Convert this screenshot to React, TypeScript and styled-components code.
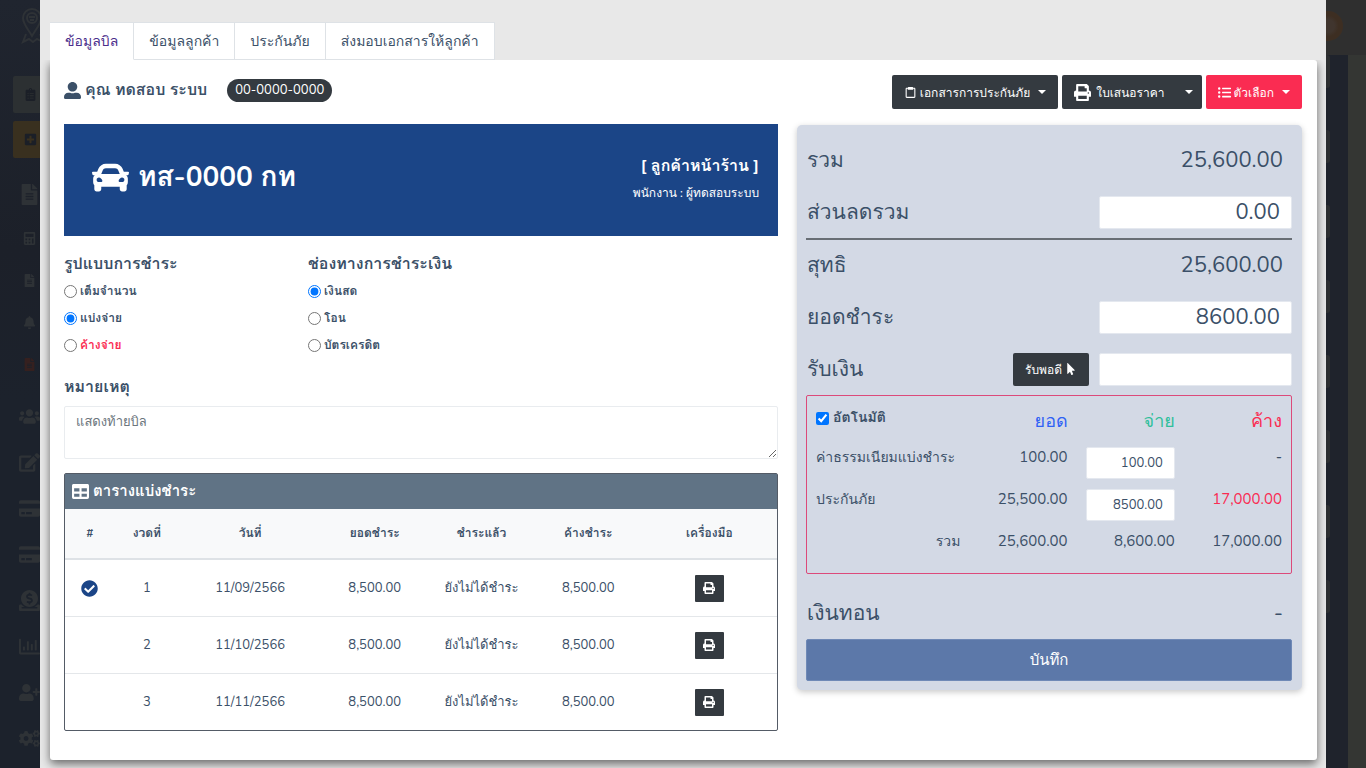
import React from "react";
import styled, { createGlobalStyle } from "styled-components";
import {
  FaBell, FaCalculator, FaCar, FaCheckCircle, FaClipboardList, FaCogs, FaCreditCard, FaDonate, FaEdit,
  FaFileAlt, FaListUl, FaMousePointer, FaPlusSquare, FaPrint, FaRegChartBar, FaTable, FaUserAlt, FaUserPlus, FaUsers,
} from "react-icons/fa";
import { BiClipboard } from "react-icons/bi";

const Global = createGlobalStyle`
  *, *::before, *::after { box-sizing: border-box; }
  body { margin: 0; background: #1c212b; }
  body, button, input, textarea { font-family: Nunito, Lato, Loma, sans-serif; }
  h1, h2, h3, p { margin: 0; }
`;

const ink = "#3b5068";
const dark = "#343a40";
const danger = "#fa2c52";
const navy = "#1b4587";

const Page = styled.div`
  display: flex;
  min-height: 100vh;
  color: ${ink};
  font-size: 14px;
  line-height: 21px;
`;

/* Dimmed application behind the dialog */
const Sidebar = styled.nav`
  flex: 0 0 40px;
  overflow: hidden;
  background: linear-gradient(#20252f, #1c2029 250px, #1c222c 400px);
  color: #2e3236;
  padding-top: 8px;
`;
const SideLogo = styled.div`
  height: 68px;
  padding-left: 21px;
  svg { display: block; }
`;
const SideButton = styled.a<{ $warm?: boolean }>`
  display: flex;
  align-items: center;
  width: 60px;
  height: 37px;
  margin: 0 0 8px 13px;
  padding-left: 11px;
  border-radius: 2px;
  background: ${(p) => (p.$warm ? "#39301f" : "#2c3032")};
  color: #1b1f27;
`;
const SideLink = styled.a<{ $small?: boolean; $red?: boolean }>`
  display: flex;
  align-items: center;
  justify-content: center;
  width: 58px;
  height: ${(p) => (p.$small ? 42 : 46)}px;
  color: ${(p) => (p.$red ? "#35201f" : "inherit")};
`;
const SideGroup = styled.div`
  padding: 5px 0 8px;
`;
const Behind = styled.div`
  flex: 0 0 40px;
  overflow: hidden;
  display: flex;
  flex-direction: column;
  background: #343633;
`;
const BehindTop = styled.div`
  height: 55px;
  padding-top: 11px;
  background: #2f2f2f;
`;
const Avatar = styled.div`
  width: 30px;
  height: 30px;
  margin-left: -13px;
  border-radius: 50%;
  background: radial-gradient(circle, #40352e 30%, #3d2e22 50%);
`;
const BehindBody = styled.div`
  flex: 1;
  width: 22px;
  background: #1f232c;
  display: flex;
  flex-direction: column;
  gap: 42px;
`;
const Stub = styled.div`
  width: 4px;
  height: 33px;
  border-radius: 0 3px 3px 0;
  background: #2d2f31;
`;

/* Dialog */
const Modal = styled.main`
  flex: 1;
  min-width: 0;
  padding: 22px 9px 8px 10px;
  background: #e8e8e8;
`;
const Tabs = styled.div`
  display: flex;
`;
const Tab = styled.button<{ $active?: boolean }>`
  height: 38px;
  padding: 0 15px;
  border: 0 solid #dee2e6;
  border-width: 1px 1px 1px 0;
  border-bottom-color: ${(p) => (p.$active ? "#fff" : "#dee2e6")};
  background: #fff;
  color: ${(p) => (p.$active ? "#4b2e8c" : ink)};
  font-size: 14px;
  font-weight: 500;
  cursor: pointer;
`;
const Card = styled.section`
  min-height: 700px;
  padding: 15px 15px 28px 14px;
  border-radius: 0 3px 3px 3px;
  background: #fff;
  box-shadow: 0 4px 10px rgba(0, 0, 0, 0.55);
  clip-path: inset(0 -20px -20px -20px);
`;
const CardTop = styled.header`
  display: flex;
  justify-content: space-between;
  height: 49px;
`;
const Customer = styled.div`
  display: flex;
  align-items: center;
  height: 30px;
`;
const CustomerName = styled.h1`
  margin: 0 20px 0 4px;
  font-size: 16px;
  line-height: 28px;
`;
const Phone = styled.span`
  height: 23px;
  padding: 0 8px;
  border-radius: 12px;
  background: ${dark};
  color: #fff;
  font-size: 13px;
  line-height: 23px;
`;
const Actions = styled.div`
  display: flex;
  gap: 4px;
`;
const Button = styled.button<{ $red?: boolean }>`
  display: flex;
  align-items: center;
  justify-content: center;
  gap: 3px;
  height: 34px;
  padding: 0 12px;
  border: 0;
  border-radius: 2px;
  background: ${(p) => (p.$red ? danger : dark)};
  color: #fff;
  font-size: 12px;
  font-weight: 500;
  cursor: pointer;
`;
const SplitButton = styled.div`
  display: flex;
  ${Button}:first-child { gap: 5px; border-radius: 2px 0 0 2px; }
  ${Button}:last-child { padding: 0 9px 0 8px; border-radius: 0 2px 2px 0; }
`;
const Caret = styled.span`
  margin-left: 5px;
  border: 4px solid transparent;
  border-top-color: currentColor;
  border-bottom: 0;
  ${Button} > &:only-child { margin-left: 0; }
`;
const Columns = styled.div`
  display: grid;
  grid-template-columns: minmax(0, 714fr) minmax(0, 505fr);
  gap: 19px;
  align-items: start;
`;

/* Left column */
const Banner = styled.div`
  display: flex;
  align-items: center;
  justify-content: space-between;
  height: 112px;
  padding: 0 19px 0 28px;
  background: ${navy};
  color: #fff;
`;
const Plate = styled.h2`
  display: flex;
  align-items: center;
  gap: 9px;
  padding-bottom: 6px;
  font-size: 28px;
  line-height: 40px;
`;
const Seller = styled.div`
  text-align: right;
  font-size: 12px;
  line-height: 27px;
  font-weight: 500;
`;
const SellerTitle = styled.h3`
  font-size: 16px;
  line-height: 27px;
`;
const Options = styled.div`
  display: grid;
  grid-template-columns: 244px 1fr;
  margin-top: 14px;
`;
const OptionSet = styled.fieldset`
  min-width: 0;
  margin: 0;
  padding: 0;
  border: 0;
`;
const Heading = styled.legend`
  padding: 0;
  font-size: 16px;
  font-weight: 700;
  line-height: 28px;
`;
const Choice = styled.label<{ $red?: boolean }>`
  display: flex;
  align-items: center;
  gap: 3px;
  height: 27px;
  font-size: 12px;
  font-weight: 700;
  color: ${(p) => (p.$red ? danger : "inherit")};
  input { width: 13px; height: 13px; margin: 0; }
`;
const NoteLabel = styled.label`
  display: block;
  margin: 14px 0 5px;
  font-size: 16px;
  font-weight: 700;
  line-height: 28px;
`;
const Note = styled.textarea`
  display: block;
  width: 100%;
  height: 53px;
  padding: 5px 11px;
  border: 1px solid #e9ecef;
  border-radius: 2px;
  color: ${ink};
  font-size: 13px;
  line-height: 21px;
  resize: vertical;
  &::placeholder { color: #6c757d; }
`;
const Schedule = styled.section`
  margin-top: 14px;
  border: 1px solid #545b66;
  border-radius: 2px;
`;
const ScheduleTitle = styled.h2`
  display: flex;
  align-items: center;
  gap: 4px;
  height: 35px;
  padding-left: 7px;
  background: #607385;
  color: #fff;
  font-size: 15px;
`;
const ScheduleTable = styled.table`
  width: 100%;
  table-layout: fixed;
  border-collapse: collapse;
  text-align: center;
  th { height: 50px; padding: 0; background: #f8f9fa; border-bottom: 2px solid #dee2e6; font-size: 12px; }
  td { height: 57px; padding: 1px 0 0; font-size: 13px; }
  tr + tr td { border-top: 1px solid #e4e7ea; }
  svg { display: block; margin: auto; }
`;
const PrintButton = styled.button`
  width: 29px;
  height: 27px;
  padding: 0;
  border: 0;
  border-radius: 1px;
  background: ${dark};
  color: #fff;
  font-size: 12px;
  vertical-align: middle;
`;

/* Right column */
const Summary = styled.section`
  margin-top: 1px;
  padding: 9px 10px 9px 9px;
  border-radius: 5px;
  background: #d3d9e5;
  box-shadow: 0 2px 6px rgba(0, 0, 0, 0.22);
`;
const Line = styled.div`
  display: flex;
  align-items: center;
  height: 52px;
  padding-left: 1px;
  font-size: 22px;
  line-height: 36px;
  > :first-child { flex: 1; font-weight: 500; font-size: 21px; }
`;
const Amount = styled.span`
  padding-right: 9px;
`;
const Rule = styled.hr`
  height: 2px;
  margin: 0 0 -1px;
  border: 0;
  background: #686e75;
`;
const Field = styled.input`
  width: 193px;
  height: 33px;
  padding: 0 11px;
  border: 1px solid #e4e8ef;
  border-radius: 2px;
  background: #fff;
  color: ${ink};
  font-size: 22px;
  text-align: right;
`;
const ExactButton = styled(Button)`
  height: 33px;
  margin-right: 10px;
`;
const SplitBox = styled.div`
  padding: 0 9px;
  border: 1px solid #dc4a7a;
  border-radius: 2px;
`;
const SplitTable = styled.table`
  width: 100%;
  table-layout: fixed;
  border-collapse: collapse;
  text-align: right;
  font-size: 15px;
  th, td { height: 42px; padding: 0; vertical-align: top; font-weight: 400; line-height: 21px; }
  thead th { height: 51px; padding-top: 11px; font-size: 18px; line-height: 28px; font-weight: 500; }
  th:first-child { text-align: left; font-size: 14px; white-space: nowrap; }
  tfoot th:first-child { text-align: right; }
`;
const Auto = styled.label`
  display: flex;
  align-items: center;
  gap: 4px;
  height: 22px;
  font-size: 14px;
  font-weight: 700;
  input { width: 13px; height: 13px; margin: 0; }
`;
const SmallField = styled(Field)`
  width: 89px;
  height: 32px;
  font-size: 13px;
`;
const Tone = styled.span<{ $color: string }>`
  color: ${(p) => p.$color};
`;
const ChangeLine = styled(Line)`
  margin-top: 13px;
`;
const Save = styled.button`
  display: block;
  width: 100%;
  height: 42px;
  border: 1px solid #6f89b6;
  border-radius: 2px;
  background: #5c78a9;
  color: #fff;
  font-size: 15px;
  font-weight: 500;
`;

const tabs = ["ข้อมูลบิล", "ข้อมูลลูกค้า", "ประกันภัย", "ส่งมอบเอกสารให้ลูกค้า"];
const columns = [
  ["#", "7%"], ["งวดที่", "9%"], ["วันที่", "20%"], ["ยอดชำระ", "15%"],
  ["ชำระแล้ว", "15%"], ["ค้างชำระ", "15%"], ["เครื่องมือ", "19%"],
];
const rows = ["11/09/2566", "11/10/2566", "11/11/2566"];
const menu = [FaUsers, FaEdit, FaCreditCard, FaCreditCard, FaDonate, FaRegChartBar, FaUserPlus, FaCogs];

export default function App() {
  return (
    <Page>
      <Global />
      <Sidebar aria-hidden>
        <SideLogo>
          <svg width="24" height="36" viewBox="0 0 24 36" fill="none" stroke="currentColor" strokeWidth="2">
            <path d="M11 28C7 21 2 16 2 10a9 9 0 0 1 18 0c0 6-5 11-9 18Z" />
            <circle cx="11" cy="10" r="5" />
            <path d="M8 9h6M9 12h4M5 26l-3 8 6-3 4 3 4-3 6 3-3-8" />
          </svg>
        </SideLogo>
        <SideButton href="#"><FaClipboardList size={13} /></SideButton>
        <SideButton href="#" $warm><FaPlusSquare size={13} /></SideButton>
        <SideGroup>
          <SideLink href="#"><FaFileAlt size={21} /></SideLink>
          <SideLink href="#" $small><FaCalculator size={13} /></SideLink>
          <SideLink href="#" $small><FaFileAlt size={13} /></SideLink>
          <SideLink href="#" $small><FaBell size={13} /></SideLink>
          <SideLink href="#" $small $red><FaFileAlt size={13} /></SideLink>
        </SideGroup>
        {menu.map((Icon, i) => <SideLink href="#" key={i}><Icon size={21} /></SideLink>)}
      </Sidebar>

      <Modal>
        <Tabs role="tablist">
          {tabs.map((t, i) => <Tab key={t} role="tab" aria-selected={i === 0} $active={i === 0}>{t}</Tab>)}
        </Tabs>
        <Card>
          <CardTop>
            <Customer>
              <FaUserAlt size={17} />
              <CustomerName>คุณ ทดสอบ ระบบ</CustomerName>
              <Phone>00-0000-0000</Phone>
            </Customer>
            <Actions>
              <Button><BiClipboard size={13} />เอกสารการประกันภัย<Caret /></Button>
              <SplitButton>
                <Button><FaPrint size={17} />ใบเสนอราคา</Button>
                <Button aria-label="เมนูใบเสนอราคา"><Caret /></Button>
              </SplitButton>
              <Button $red><FaListUl size={13} />ตัวเลือก<Caret /></Button>
            </Actions>
          </CardTop>
          <Columns>
            <div>
              <Banner>
                <Plate><FaCar size={37} />ทส-0000 กท</Plate>
                <Seller>
                  <SellerTitle>[ ลูกค้าหน้าร้าน ]</SellerTitle>
                  <p>พนักงาน : ผู้ทดสอบระบบ</p>
                </Seller>
              </Banner>
              <Options>
                <OptionSet>
                  <Heading>รูปแบบการชำระ</Heading>
                  <Choice><input type="radio" name="plan" />เต็มจำนวน</Choice>
                  <Choice><input type="radio" name="plan" defaultChecked />แบ่งจ่าย</Choice>
                  <Choice $red><input type="radio" name="plan" />ค้างจ่าย</Choice>
                </OptionSet>
                <OptionSet>
                  <Heading>ช่องทางการชำระเงิน</Heading>
                  <Choice><input type="radio" name="channel" defaultChecked />เงินสด</Choice>
                  <Choice><input type="radio" name="channel" />โอน</Choice>
                  <Choice><input type="radio" name="channel" />บัตรเครดิต</Choice>
                </OptionSet>
              </Options>
              <NoteLabel htmlFor="note">หมายเหตุ</NoteLabel>
              <Note id="note" placeholder="แสดงท้ายบิล" />
              <Schedule>
                <ScheduleTitle><FaTable size={17} />ตารางแบ่งชำระ</ScheduleTitle>
                <ScheduleTable>
                  <colgroup>{columns.map(([name, width]) => <col key={name} width={width} />)}</colgroup>
                  <thead><tr>{columns.map(([name]) => <th key={name}>{name}</th>)}</tr></thead>
                  <tbody>
                    {rows.map((date, i) => (
                      <tr key={date}>
                        <td>{i === 0 && <FaCheckCircle size={17} color={navy} />}</td>
                        <td>{i + 1}</td>
                        <td>{date}</td>
                        <td>8,500.00</td>
                        <td>ยังไม่ได้ชำระ</td>
                        <td>8,500.00</td>
                        <td><PrintButton aria-label="พิมพ์"><FaPrint /></PrintButton></td>
                      </tr>
                    ))}
                  </tbody>
                </ScheduleTable>
              </Schedule>
            </div>

            <Summary>
              <Line><span>รวม</span><Amount>25,600.00</Amount></Line>
              <Line><label htmlFor="discount">ส่วนลดรวม</label><Field id="discount" defaultValue="0.00" /></Line>
              <Rule />
              <Line><span>สุทธิ</span><Amount>25,600.00</Amount></Line>
              <Line><label htmlFor="pay">ยอดชำระ</label><Field id="pay" defaultValue="8600.00" /></Line>
              <Line>
                <label htmlFor="cash">รับเงิน</label>
                <ExactButton>รับพอดี<FaMousePointer size={12} /></ExactButton>
                <Field id="cash" />
              </Line>
              <SplitBox>
                <SplitTable>
                  <colgroup><col width="31%" /><col width="23%" /><col width="23%" /><col width="23%" /></colgroup>
                  <thead>
                    <tr>
                      <th><Auto><input type="checkbox" defaultChecked />อัตโนมัติ</Auto></th>
                      <th><Tone $color="#2f62f5">ยอด</Tone></th>
                      <th><Tone $color="#2fbf9b">จ่าย</Tone></th>
                      <th><Tone $color={danger}>ค้าง</Tone></th>
                    </tr>
                  </thead>
                  <tbody>
                    <tr>
                      <th>ค่าธรรมเนียมแบ่งชำระ</th>
                      <td>100.00</td>
                      <td><SmallField aria-label="จ่ายค่าธรรมเนียม" defaultValue="100.00" /></td>
                      <td>-</td>
                    </tr>
                    <tr>
                      <th>ประกันภัย</th>
                      <td>25,500.00</td>
                      <td><SmallField aria-label="จ่ายประกันภัย" defaultValue="8500.00" /></td>
                      <td><Tone $color={danger}>17,000.00</Tone></td>
                    </tr>
                  </tbody>
                  <tfoot>
                    <tr><th>รวม</th><td>25,600.00</td><td>8,600.00</td><td>17,000.00</td></tr>
                  </tfoot>
                </SplitTable>
              </SplitBox>
              <ChangeLine><span>เงินทอน</span><Amount>-</Amount></ChangeLine>
              <Save>บันทึก</Save>
            </Summary>
          </Columns>
        </Card>
      </Modal>

      <Behind aria-hidden>
        <BehindTop><Avatar /></BehindTop>
        <BehindBody>{Array.from({ length: 8 }, (_, i) => <Stub key={i} />)}</BehindBody>
      </Behind>
    </Page>
  );
}
